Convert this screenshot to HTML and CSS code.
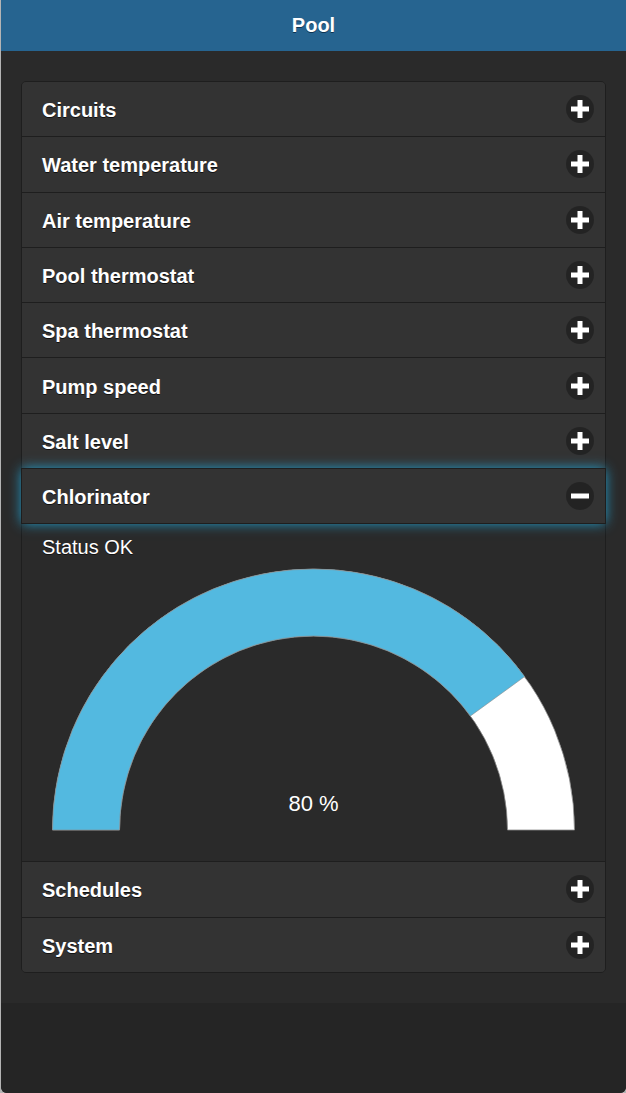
FILE: index.html
```html
<!DOCTYPE html>
<html lang="en">
<head>
<meta charset="utf-8">
<title>Pool</title>
<link rel="stylesheet" href="styles.css">
</head>
<body>
<div class="page">
  <header class="hdr"><h1 class="title">Pool</h1></header>
  <main class="content">
    <div class="set">
      <div class="item first"><h3 class="head"><span>Circuits</span><span class="ico"><svg viewBox="0 0 28 28"><rect x="5" y="11.5" width="18" height="5" fill="#fff"/><rect x="11.5" y="5" width="5" height="18" fill="#fff"/></svg></span></h3></div>
      <div class="item"><h3 class="head"><span>Water temperature</span><span class="ico"><svg viewBox="0 0 28 28"><rect x="5" y="11.5" width="18" height="5" fill="#fff"/><rect x="11.5" y="5" width="5" height="18" fill="#fff"/></svg></span></h3></div>
      <div class="item"><h3 class="head"><span>Air temperature</span><span class="ico"><svg viewBox="0 0 28 28"><rect x="5" y="11.5" width="18" height="5" fill="#fff"/><rect x="11.5" y="5" width="5" height="18" fill="#fff"/></svg></span></h3></div>
      <div class="item"><h3 class="head"><span>Pool thermostat</span><span class="ico"><svg viewBox="0 0 28 28"><rect x="5" y="11.5" width="18" height="5" fill="#fff"/><rect x="11.5" y="5" width="5" height="18" fill="#fff"/></svg></span></h3></div>
      <div class="item"><h3 class="head"><span>Spa thermostat</span><span class="ico"><svg viewBox="0 0 28 28"><rect x="5" y="11.5" width="18" height="5" fill="#fff"/><rect x="11.5" y="5" width="5" height="18" fill="#fff"/></svg></span></h3></div>
      <div class="item"><h3 class="head"><span>Pump speed</span><span class="ico"><svg viewBox="0 0 28 28"><rect x="5" y="11.5" width="18" height="5" fill="#fff"/><rect x="11.5" y="5" width="5" height="18" fill="#fff"/></svg></span></h3></div>
      <div class="item"><h3 class="head"><span>Salt level</span><span class="ico"><svg viewBox="0 0 28 28"><rect x="5" y="11.5" width="18" height="5" fill="#fff"/><rect x="11.5" y="5" width="5" height="18" fill="#fff"/></svg></span></h3></div>
      <div class="item open">
        <h3 class="head focus"><span>Chlorinator</span><span class="ico"><svg viewBox="0 0 28 28"><rect x="5" y="11.5" width="18" height="5" fill="#fff"/></svg></span></h3>
        <div class="body">
          <p class="status">Status OK</p>
          <svg class="gauge" width="543" height="292" viewBox="0 0 543 292">
            <path d="M10.5 270 A261 261 0 0 1 532.5 270 L465.5 270 A194 194 0 0 0 77.5 270 Z" fill="#ffffff" stroke="#8c8c8c" stroke-width="0.8"/>
            <path d="M10.5 270 A261 261 0 0 1 482.65 116.59 L428.45 155.97 A194 194 0 0 0 77.5 270 Z" fill="#53b9e0" stroke="#8c8c8c" stroke-width="0.6"/>
            <text x="271.5" y="251" text-anchor="middle" class="gval">80 %</text>
          </svg>
        </div>
      </div>
      <div class="item"><h3 class="head"><span>Schedules</span><span class="ico"><svg viewBox="0 0 28 28"><rect x="5" y="11.5" width="18" height="5" fill="#fff"/><rect x="11.5" y="5" width="5" height="18" fill="#fff"/></svg></span></h3></div>
      <div class="item last"><h3 class="head"><span>System</span><span class="ico"><svg viewBox="0 0 28 28"><rect x="5" y="11.5" width="18" height="5" fill="#fff"/><rect x="11.5" y="5" width="5" height="18" fill="#fff"/></svg></span></h3></div>
    </div>
  </main>
  <div class="rest"></div>
</div>
</body>
</html>
```

FILE: styles.css
```css
html, body {
  margin: 0;
  padding: 0;
}
body {
  background: #b4b4b4;
  font-family: "Liberation Sans", Arial, sans-serif;
  font-size: 20px;
  line-height: 1.3;
  color: #fff;
}
.page {
  margin-left: 1px;
  width: 625px;
  height: 1093px;
  display: flex;
  flex-direction: column;
  background: #252525;
  border-radius: 0 0 6px 6px;
  overflow: hidden;
}
.hdr {
  height: 51px;
  flex: none;
  background: #266490;
  display: flex;
  align-items: center;
  justify-content: center;
}
.title {
  margin: 0 0 2px 0;
  font-size: 20px;
  font-weight: bold;
  line-height: 24px;
  text-shadow: 0 1px 0 #0d3350;
}
.content {
  flex: none;
  background: #2a2a2a;
  padding: 30px 20px 30px 20px;
}
.set {
  border: 1px solid #1e1e1e;
  border-radius: 5px;
}
.item + .item {
  border-top: 1px solid #1e1e1e;
}
.head {
  margin: 0;
  height: 54.29px;
  box-sizing: border-box;
  padding: 15px 11px 13px 20px;
  background: #333333;
  font-size: 20px;
  font-weight: bold;
  line-height: 26px;
  text-shadow: 0 1px 0 #111;
  display: flex;
  align-items: center;
  justify-content: space-between;
}
.first .head {
  border-radius: 4px 4px 0 0;
}
.last .head {
  border-radius: 0 0 4px 4px;
}
.head.focus {
  position: relative;
  z-index: 1;
  box-shadow: 0 0 12px #22aadd;
  outline: 1px solid #1e1e1e;
}
.ico {
  width: 28px;
  height: 28px;
  margin: -2px 0 0 0;
  border-radius: 50%;
  background: rgba(0, 0, 0, 0.3);
  display: flex;
}
.ico svg {
  width: 28px;
  height: 28px;
}
.body {
  background: #2a2a2a;
  padding: 11px 20px 9px 20px;
}
.status {
  margin: 0;
  font-size: 20px;
  line-height: 26px;
  text-shadow: 0 1px 0 #111;
}
.gauge {
  display: block;
}
.gval {
  font-family: "Liberation Sans", Arial, sans-serif;
  font-size: 22px;
  fill: #ffffff;
}
.rest {
  flex: 1;
  background: #252525;
}
```
